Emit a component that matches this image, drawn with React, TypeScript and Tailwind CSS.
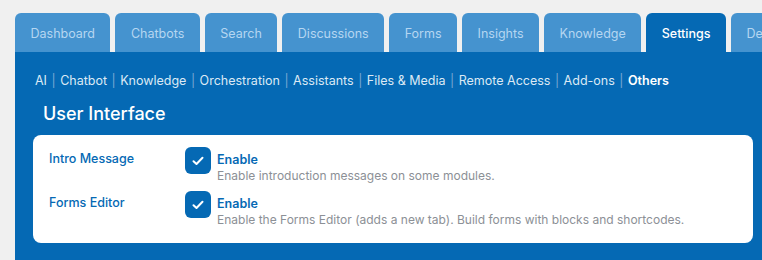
/**
 * Settings page — tab bar, sub navigation and the "User Interface" options card.
 */
import React from 'react';

const tabs = [
  'Dashboard',
  'Chatbots',
  'Search',
  'Discussions',
  'Forms',
  'Insights',
  'Knowledge',
  'Settings',
  'Dev Tools',
];

const sections = [
  'AI',
  'Chatbot',
  'Knowledge',
  'Orchestration',
  'Assistants',
  'Files & Media',
  'Remote Access',
  'Add-ons',
  'Others',
];

const options = [
  {
    label: 'Intro Message',
    title: 'Enable',
    description: 'Enable introduction messages on some modules.',
  },
  {
    label: 'Forms Editor',
    title: 'Enable',
    description: 'Enable the Forms Editor (adds a new tab). Build forms with blocks and shortcodes.',
  },
];

function Checkbox() {
  return (
    <div className="w-[26px] h-[27px] shrink-0 rounded-[6px] bg-[#0569b4] flex items-center justify-center">
      <svg width="12" height="10" viewBox="0 0 12 10" fill="none">
        <path d="M1.5 5.2 4.5 8 10.5 1.8" stroke="white" strokeWidth="2" strokeLinecap="round" strokeLinejoin="round" />
      </svg>
    </div>
  );
}

export default function App() {
  return (
    <div
      className="h-[260px] w-[762px] overflow-hidden bg-[#f0f0f0] pl-[15px] pt-[13px]"
      style={{ fontFamily: 'Inter, "Noto Sans", sans-serif' }}
    >
      {/* Tabs */}
      <div className="flex gap-[5px] whitespace-nowrap">
        {tabs.map((tab) => {
          const active = tab === 'Settings';
          return (
            <div
              key={tab}
              className={
                active
                  ? 'h-[39px] px-[15.5px] pt-[3px] shrink-0 rounded-t-[6px] flex items-center text-[12.5px] font-medium bg-[#0569b4] text-white'
                  : 'h-[39px] px-[15.5px] pt-[3px] shrink-0 rounded-t-[6px] flex items-center text-[12.5px] bg-[#4593cf] text-[#b5d6f1]'
              }
            >
              {tab}
            </div>
          );
        })}
      </div>

      {/* Main panel */}
      <div className="bg-[#0569b4] h-[220px] pl-[18px] pr-[9px] pt-[20px]">
        <div className="flex items-center pl-[2px] text-[12.5px] leading-[18px] whitespace-nowrap">
          {sections.map((s, i) => (
            <React.Fragment key={s}>
              {i > 0 && <span className="text-[#7aa8d3] px-[4.5px]">|</span>}
              <span className={s === 'Others' ? 'text-white font-semibold' : 'text-[#dce9f5]'}>{s}</span>
            </React.Fragment>
          ))}
        </div>

        <h2 className="mt-[12px] pl-[10px] text-[18px] leading-[24px] text-white font-medium">User Interface</h2>

        <div className="mt-[9px] bg-white rounded-[8px] pl-[16px] pt-[12px] pb-[15px] flex flex-col gap-[7px]">
          {options.map((o) => (
            <div key={o.label} className="flex items-start">
              <div className="w-[136px] pt-[4px] text-[12.5px] leading-[16px] font-medium text-[#0569b4]">
                {o.label}
              </div>
              <Checkbox />
              <div className="ml-[6px] pt-[5px]">
                <div className="text-[12.5px] leading-[16px] font-semibold text-[#0569b4]">{o.title}</div>
                <div className="text-[12px] leading-[16px] text-[#8c9096]">{o.description}</div>
              </div>
            </div>
          ))}
        </div>
      </div>
    </div>
  );
}
